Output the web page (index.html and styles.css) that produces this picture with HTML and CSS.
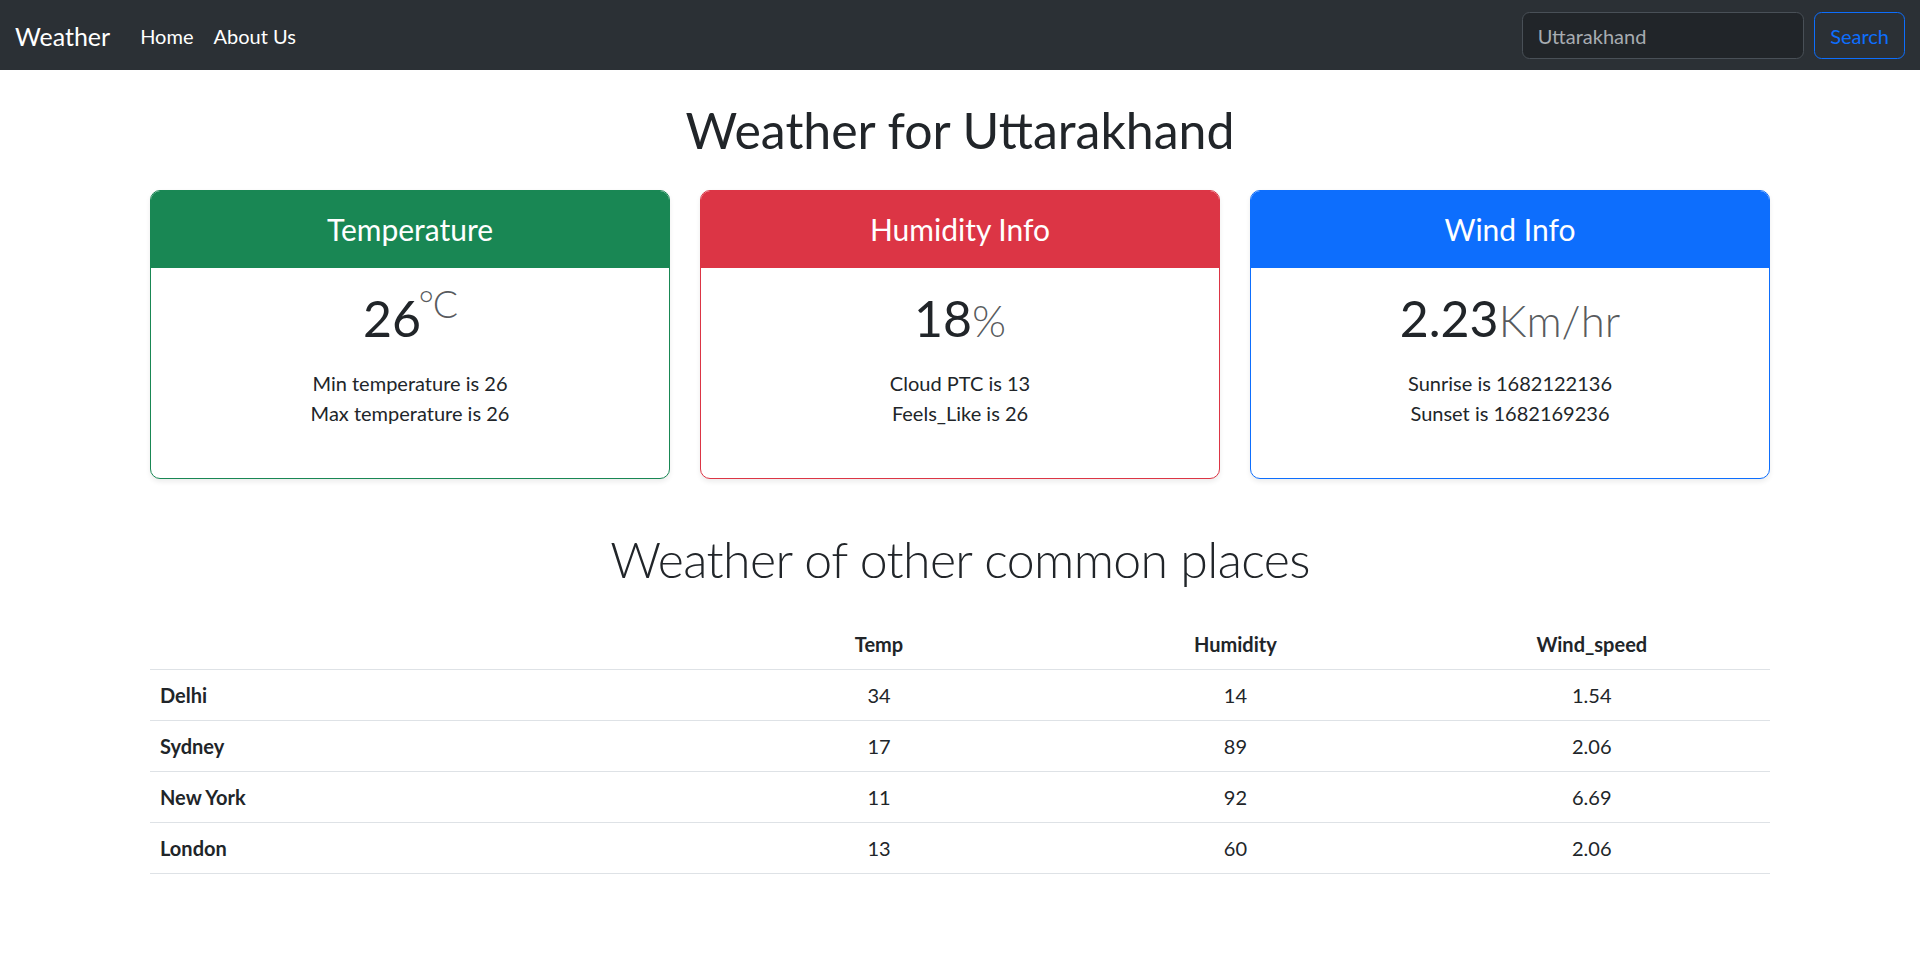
FILE: index.html
```html
<!DOCTYPE html>
<html lang="en">
<head>
<meta charset="utf-8">
<title>Weather</title>
<link rel="stylesheet" href="styles.css">
</head>
<body>
<nav class="navbar">
  <div class="navbar-inner">
    <a class="brand" href="#">Weather</a>
    <ul class="nav-links">
      <li><a class="nav-link" href="#">Home</a></li>
      <li><a class="nav-link" href="#">About Us</a></li>
    </ul>
    <form class="search">
      <input class="search-input" type="search" placeholder="Uttarakhand" aria-label="Search">
      <button class="search-btn" type="button">Search</button>
    </form>
  </div>
</nav>

<main class="container">
  <h1 class="page-title">Weather for Uttarakhand</h1>

  <div class="cards">
    <div class="card card-green">
      <div class="card-header"><h4 class="card-heading">Temperature</h4></div>
      <div class="card-body">
        <h1 class="card-value">26<sup class="unit">°C</sup></h1>
        <ul class="card-list">
          <li>Min temperature is 26</li>
          <li>Max temperature is 26</li>
        </ul>
      </div>
    </div>
    <div class="card card-red">
      <div class="card-header"><h4 class="card-heading">Humidity Info</h4></div>
      <div class="card-body">
        <h1 class="card-value">18<small class="unit">%</small></h1>
        <ul class="card-list">
          <li>Cloud PTC is 13</li>
          <li>Feels_Like is 26</li>
        </ul>
      </div>
    </div>
    <div class="card card-blue">
      <div class="card-header"><h4 class="card-heading">Wind Info</h4></div>
      <div class="card-body">
        <h1 class="card-value">2.23<small class="unit">Km/hr</small></h1>
        <ul class="card-list">
          <li>Sunrise is 1682122136</li>
          <li>Sunset is 1682169236</li>
        </ul>
      </div>
    </div>
  </div>

  <h2 class="section-title">Weather of other common places</h2>

  <table class="table">
    <colgroup>
      <col class="col-city">
      <col class="col-data">
      <col class="col-data">
      <col class="col-data">
    </colgroup>
    <thead>
      <tr><th></th><th>Temp</th><th>Humidity</th><th>Wind_speed</th></tr>
    </thead>
    <tbody>
      <tr><th>Delhi</th><td>34</td><td>14</td><td>1.54</td></tr>
      <tr><th>Sydney</th><td>17</td><td>89</td><td>2.06</td></tr>
      <tr><th>New York</th><td>11</td><td>92</td><td>6.69</td></tr>
      <tr><th>London</th><td>13</td><td>60</td><td>2.06</td></tr>
    </tbody>
  </table>
</main>
</body>
</html>
```

FILE: styles.css
```css
html {
  zoom: 1.25;
}

body {
  margin: 0;
  font-family: Lato, "Liberation Sans", sans-serif;
  font-size: 16px;
  line-height: 1.5;
  color: #212529;
  background: #fff;
}

/* Navbar */
.navbar {
  background: #2b3035;
  padding: 8px 0;
}

.navbar-inner {
  display: flex;
  align-items: center;
  padding: 0 12px;
}

.brand {
  font-size: 20px;
  line-height: 30px;
  padding: 6px 0 4px;
  margin-right: 16px;
  color: #fff;
  text-decoration: none;
}

.nav-links {
  display: flex;
  list-style: none;
  margin: 0;
  padding: 0;
}

.nav-link {
  display: block;
  padding: 9px 8px 7px;
  color: #fff;
  text-decoration: none;
}

.search {
  margin: 0 0 0 auto;
  display: flex;
  gap: 8px;
}

.search-input {
  width: 226px;
  box-sizing: border-box;
  padding: 7px 12px 5px;
  font: inherit;
  line-height: 24px;
  color: #dee2e6;
  background: #212529;
  border: 1px solid #495057;
  border-radius: 6px;
  outline: none;
}

.search-input::placeholder {
  color: #a7acb1;
}

.search-btn {
  padding: 7px 12px 5px;
  font: inherit;
  line-height: 24px;
  color: #0d6efd;
  background: transparent;
  border: 1px solid #0d6efd;
  border-radius: 6px;
}

/* Content */
.container {
  max-width: 1320px;
  margin: 0 auto;
  padding: 0 12px;
  box-sizing: border-box;
  text-align: center;
}

.page-title {
  font-size: 40px;
  font-weight: 400;
  line-height: 1.2;
  margin: 24px 0;
}

.cards {
  display: flex;
  gap: 24px;
  margin-bottom: 24px;
}

.card {
  flex: 1 1 0;
  display: flex;
  flex-direction: column;
  border: 1px solid;
  border-radius: 8px;
  box-shadow: 0 2px 4px rgba(0, 0, 0, 0.075);
  background: #fff;
  overflow: hidden;
}

.card-header {
  padding: 16px;
  color: #fff;
  border-bottom: 1px solid;
}

.card-heading {
  margin: 0;
  font-size: 24px;
  font-weight: 400;
  line-height: 1.2;
}

.card-green { border-color: #198754; }
.card-green .card-header { background: #198754; border-color: #198754; }
.card-red { border-color: #dc3545; }
.card-red .card-header { background: #dc3545; border-color: #dc3545; }
.card-blue { border-color: #0d6efd; }
.card-blue .card-header { background: #0d6efd; border-color: #0d6efd; }

.card-body {
  flex: 1 1 auto;
  padding: 16px;
}

.card-value {
  margin: 0 0 8px;
  font-size: 40px;
  font-weight: 400;
  line-height: 1.2;
}

.unit {
  color: rgba(33, 37, 41, 0.75);
  font-weight: 300;
}

small.unit {
  font-size: 0.875em;
}

sup.unit {
  font-size: 0.75em;
  line-height: 0;
  position: relative;
  top: -0.5em;
  vertical-align: baseline;
  margin-left: -2px;
  letter-spacing: -1px;
}

.card-list {
  list-style: none;
  margin: 16px 0 24px;
  padding: 0;
}

.section-title {
  font-size: 40px;
  font-weight: 300;
  line-height: 1.2;
  letter-spacing: -0.5px;
  margin: 40px 0 24px;
}

/* Table */
.table {
  width: 100%;
  border-collapse: collapse;
  margin-bottom: 16px;
}

.col-city { width: 34%; }
.col-data { width: 22%; }

.table th,
.table td {
  padding: 8px;
  border-bottom: 1px solid #dee2e6;
  text-align: center;
}

.table th {
  font-weight: 700;
}

.table tbody th {
  text-align: left;
}
```
